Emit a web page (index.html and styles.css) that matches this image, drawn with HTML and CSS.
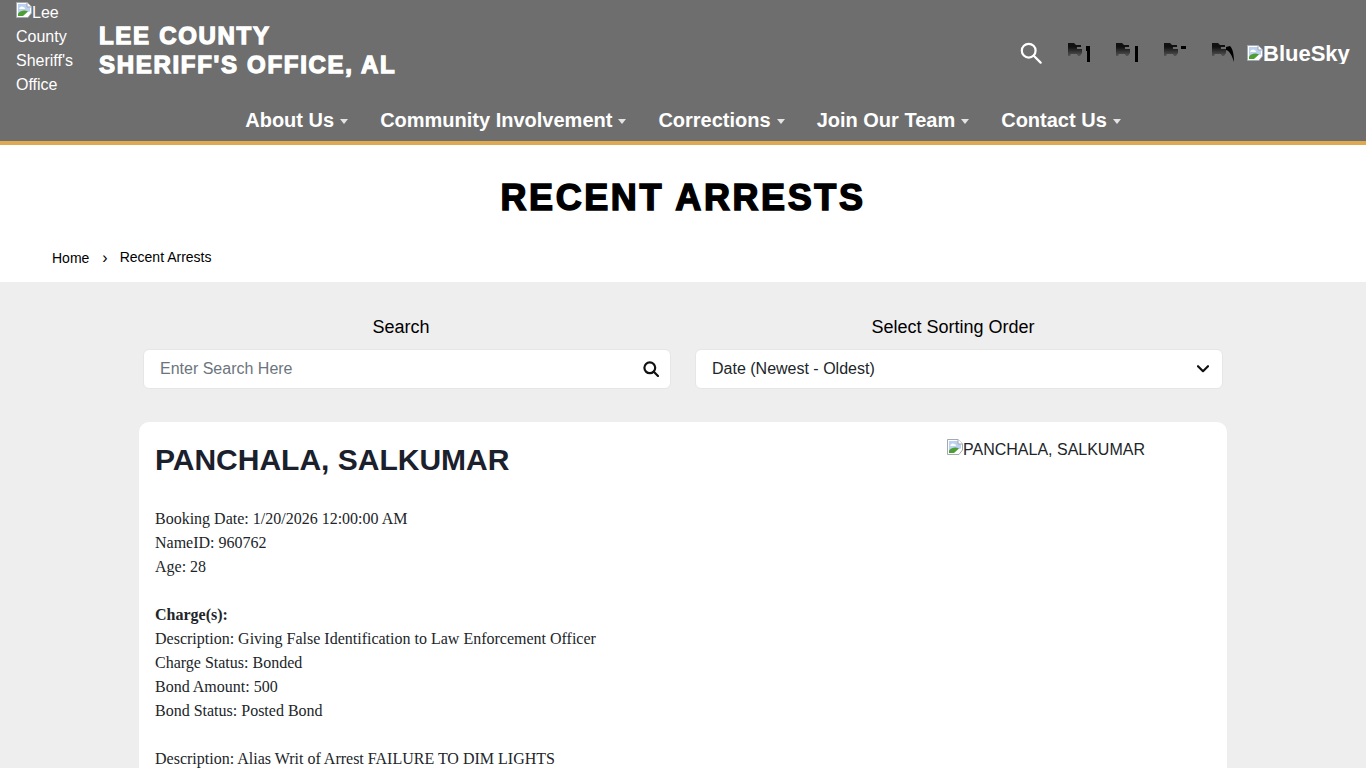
FILE: index.html
```html
<!DOCTYPE html>
<html lang="en">
<head>
    <meta charset="UTF-8">
    <meta name="viewport" content="width=device-width, initial-scale=1.0">
    <title>Recent Arrests | Lee County Sheriff's Office, AL</title>
    <link rel="stylesheet" href="styles.css">
</head>
<body>

<svg class="sprite" width="0" height="0" aria-hidden="true">
    <defs>
        <linearGradient id="flag-fade" x1="0" y1="0" x2="0" y2="1">
            <stop offset="0.3" stop-color="#111"/>
            <stop offset="1" stop-color="#555"/>
        </linearGradient>
    </defs>
    <symbol id="broken" viewBox="0 0 16 16">
        <path d="M0.5 0.5H11L15.5 5V11L12 15.5H0.5Z" fill="#fff" stroke="#a3a9b0"/>
        <path d="M2 2H10.5L14 5.5V9.5L2 12Z" fill="#bcd2f0"/>
        <path d="M4 5.5C5 4 7 4 8 5.5C9.5 5.5 9.5 7 8 7H4C3 7 3 5.5 4 5.5Z" fill="#fff"/>
        <path d="M2 14V11.5C5 8 9 8 12 9.5L7 14Z" fill="#4f9e35"/>
        <path d="M11 0.5V5H15.5" fill="#fff" stroke="#a3a9b0"/>
    </symbol>
    <symbol id="flag" viewBox="0 0 14 13">
        <path d="M0 0H6L8 2H13V4H9V6H14V10L12 13H10L9 11H3L2 13H0Z" fill="url(#flag-fade)"/>
    </symbol>
</svg>

<header class="site-header">
    <div class="header-top">
        <a class="logo" href="#"><svg class="broken-icon"><use href="#broken"/></svg>Lee County Sheriff's Office</a>
        <h1 class="site-name">LEE COUNTY<br>SHERIFF'S OFFICE, AL</h1>
        <div class="header-icons">
            <svg class="search-icon" width="22" height="22" viewBox="0 0 24 24" fill="none" stroke="#fff" stroke-width="2.4">
                <circle cx="9.5" cy="9.5" r="7.5"/>
                <path d="M15 15L22.5 22.5" stroke-linecap="round"/>
            </svg>
            <svg class="social" width="24" height="20" viewBox="0 0 24 20">
                <use href="#flag" width="14" height="13"/>
                <path d="M18 3H22V19H19V8H18Z"/>
            </svg>
            <svg class="social" width="24" height="20" viewBox="0 0 24 20">
                <use href="#flag" width="14" height="13"/>
                <path d="M19 3H22V19H19Z"/>
            </svg>
            <svg class="social" width="24" height="20" viewBox="0 0 24 20">
                <use href="#flag" width="14" height="13"/>
                <path d="M17 3H22V6H17Z"/>
            </svg>
            <svg class="social" width="24" height="20" viewBox="0 0 24 20">
                <use href="#flag" width="14" height="13"/>
                <path d="M14 4L18 3C21 6 22 12 22 19C20 13 18 8 14 7Z"/>
            </svg>
            <a class="bluesky" href="#"><svg class="broken-icon"><use href="#broken"/></svg>BlueSky</a>
        </div>
    </div>
    <nav class="main-nav">
        <a href="#">About Us</a>
        <a href="#">Community Involvement</a>
        <a href="#">Corrections</a>
        <a href="#">Join Our Team</a>
        <a href="#">Contact Us</a>
    </nav>
</header>

<section class="page-title">
    <h2>RECENT ARRESTS</h2>
    <div class="breadcrumb">
        <a href="#">Home</a>
        <span class="sep">&#8250;</span>
        <span class="current">Recent Arrests</span>
    </div>
</section>

<main class="content">
    <div class="filters">
        <div class="filter">
            <label for="search">Search</label>
            <div class="field">
                <input type="text" id="search" placeholder="Enter Search Here">
                <svg class="field-icon icon-search" width="16" height="16" viewBox="0 0 16 16" fill="none" stroke="#111" stroke-width="2.2">
                    <circle cx="6.8" cy="6.8" r="5.4"/>
                    <path d="M10.8 10.8L15 15" stroke-linecap="round"/>
                </svg>
            </div>
        </div>
        <div class="filter">
            <label for="sort">Select Sorting Order</label>
            <div class="field">
                <select id="sort">
                    <option>Date (Newest - Oldest)</option>
                </select>
                <svg class="field-icon icon-chevron" width="12" height="8" viewBox="0 0 12 8" fill="none" stroke="#111" stroke-width="2.2">
                    <path d="M1 1.2L6 6.2L11 1.2" stroke-linecap="round" stroke-linejoin="round"/>
                </svg>
            </div>
        </div>
    </div>

    <article class="arrest-card">
        <div class="arrest-info">
            <h3>PANCHALA, SALKUMAR</h3>
            <p>Booking Date: 1/20/2026 12:00:00 AM<br>
            NameID: 960762<br>
            Age: 28</p>
            <p><b>Charge(s):</b><br>
            Description: Giving False Identification to Law Enforcement Officer<br>
            Charge Status: Bonded<br>
            Bond Amount: 500<br>
            Bond Status: Posted Bond</p>
            <p>Description: Alias Writ of Arrest FAILURE TO DIM LIGHTS</p>
        </div>
        <div class="arrest-photo"><svg class="broken-icon"><use href="#broken"/></svg>PANCHALA, SALKUMAR</div>
    </article>
</main>

</body>
</html>
```

FILE: styles.css
```css
body {
    margin: 0;
    font-family: "Liberation Sans", Arial, sans-serif;
    color: #212529;
    background-color: #eee;
}
a {
    color: inherit;
    text-decoration: none;
}
.sprite {
    position: absolute;
}
.broken-icon {
    width: 16px;
    height: 16px;
    vertical-align: baseline;
}

/* header */
.site-header {
    height: 141px;
    background-color: #6e6e6e;
    border-bottom: 4px solid #dfaa4f;
    color: #fff;
}
.header-top {
    display: flex;
    align-items: flex-start;
    height: 100px;
    padding: 0 16px;
}
.logo {
    width: 67px;
    flex-shrink: 0;
    padding-top: 1px;
    font-size: 16px;
    line-height: 24px;
}
.site-name {
    margin: 21px 0 0 16px;
    font-size: 24px;
    line-height: 29px;
    font-weight: 700;
    letter-spacing: 1.7px;
    -webkit-text-stroke: 1.3px #fff;
}
.header-icons {
    display: flex;
    align-items: flex-start;
    margin-left: auto;
    padding-top: 42px;
}
.search-icon {
    margin-right: 26px;
}
.social {
    margin: 1px 24px 0 0;
    fill: #000;
}
.social:nth-of-type(5) {
    margin-right: 11px;
}
.bluesky {
    display: block;
    width: 103px;
    height: 22px;
    overflow: hidden;
    font-size: 22px;
    line-height: 24px;
    font-weight: 700;
    white-space: nowrap;
}

.main-nav {
    display: flex;
    justify-content: center;
    gap: 32px;
}
.main-nav a {
    font-size: 20px;
    line-height: 40px;
    font-weight: 700;
}
.main-nav a::after {
    content: "";
    display: inline-block;
    margin-left: 6px;
    vertical-align: 3px;
    border-top: 5px solid #e4e4e4;
    border-left: 4px solid transparent;
    border-right: 4px solid transparent;
}

/* title band */
.page-title {
    height: 137px;
    background-color: #fff;
    overflow: hidden;
    color: #000;
}
.page-title h2 {
    margin: 31px 0 0;
    text-align: center;
    font-size: 36px;
    line-height: 44px;
    font-weight: 700;
    letter-spacing: 2.6px;
    -webkit-text-stroke: 1.5px #000;
}
.breadcrumb {
    display: flex;
    align-items: center;
    margin: 28px 0 0 52px;
    font-size: 14px;
    line-height: 20px;
}
.breadcrumb .sep {
    margin: 0 12px 0 13px;
    font-size: 16px;
}
.breadcrumb .current {
    position: relative;
    top: -1px;
}

/* filters */
.content {
    padding: 33px 139px 0;
}
.filters {
    display: flex;
    gap: 24px;
    padding: 0 4px;
}
.filter {
    flex: 1;
}
.filter label {
    display: block;
    padding-right: 12px;
    margin-bottom: 10px;
    text-align: center;
    font-size: 18px;
    line-height: 24px;
    color: #000;
}
.field {
    position: relative;
}
.field input, .field select {
    display: block;
    box-sizing: border-box;
    width: 100%;
    height: 40px;
    padding: 0 16px;
    border: 1px solid #e6e6e6;
    border-radius: 6px;
    background-color: #fff;
    color: #212529;
    font-family: inherit;
    font-size: 16px;
    appearance: none;
    outline: none;
}
.field select {
    padding-bottom: 2px;
}
.field input::placeholder {
    color: #6c757d;
}
.field-icon {
    position: absolute;
    pointer-events: none;
}
.icon-search {
    top: 12px;
    right: 12px;
}
.icon-chevron {
    top: 16px;
    right: 14px;
}

/* arrest record */
.arrest-card {
    display: flex;
    justify-content: space-between;
    margin-top: 33px;
    padding: 16px 16px 4px;
    border-radius: 10px;
    background-color: #fff;
}
.arrest-info h3 {
    margin: 0 0 25px;
    font-size: 30px;
    line-height: 44px;
    font-weight: 700;
    color: #1a202c;
}
.arrest-info p {
    margin: 0 0 24px;
    font-family: "Liberation Serif", "Times New Roman", serif;
    font-size: 16px;
    line-height: 24px;
}
.arrest-photo {
    width: 264px;
    font-size: 16px;
    line-height: 24px;
}
```
